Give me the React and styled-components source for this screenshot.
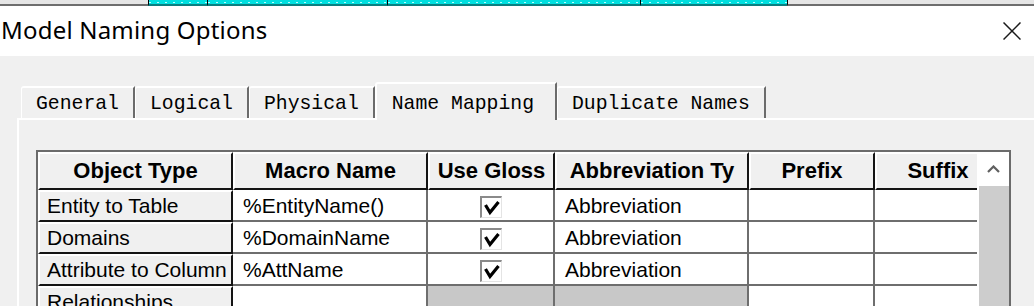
import React from 'react';
import styled, { createGlobalStyle } from 'styled-components';

const Global = createGlobalStyle`
  html, body { margin: 0; padding: 0; }
  body { background: #f0f0f0; width: 1034px; height: 306px; overflow: hidden; }
`;

const Window = styled.div`
  width: 1034px;
  height: 306px;
  overflow: hidden;
  display: flex;
  flex-direction: column;
  background: #f0f0f0;
`;

/* strip of the window behind */
const Strip = styled.div`
  height: 6px;
  flex: none;
  display: flex;
`;
const StripSeg = styled.div`
  flex: ${p => (p.$w ? `0 0 ${p.$w}px` : '1')};
  box-sizing: border-box;
  height: 100%;
  border-bottom: 2px solid ${p => (p.$cyan ? '#0b7f80' : '#6e6e6e')};
  border-left: ${p => (p.$sep ? '1px solid #000' : 'none')};
  background: ${p =>
    p.$cyan
      ? 'repeating-linear-gradient(90deg, #b8ffff 0 2px, #00dfdf 2px 8px) 0 2px / 100% 1px no-repeat, #00dfdf'
      : '#e6e6e6'};
`;

const TitleBar = styled.div`
  height: 50px;
  flex: none;
  background: #fff;
  display: flex;
  align-items: center;
  justify-content: space-between;
  padding: 0 13px 0 1px;
`;
const Title = styled.div`
  font-family: "Noto Sans", "Open Sans", sans-serif;
  font-size: 24px;
  letter-spacing: 0.2px;
  color: #000;
  line-height: 1;
  margin-top: -2px;
`;
const CloseIcon = styled.svg`
  width: 18px;
  height: 18px;
  margin-top: -1px;
`;

const Body = styled.div`
  flex: 1;
  min-height: 0;
  display: flex;
  flex-direction: column;
  padding: 26px 0 0 17px;
`;

const TabRow = styled.div`
  display: flex;
  align-items: flex-start;
  padding-left: 4px;
  height: 38px;
  margin-bottom: -2px;
  position: relative;
  z-index: 1;
`;
const Tab = styled.div`
  box-sizing: border-box;
  height: ${p => (p.$active ? 38 : 32)}px;
  margin-top: ${p => (p.$active ? 0 : 4)}px;
  padding: ${p => (p.$active ? '6px 21px 0 15px' : '2px 14px 0 14px')};
  border-top: 2px solid #fff;
  border-left: ${p => (p.$active ? 2 : 1)}px solid #fff;
  border-right: 2px solid #6b6b6b;
  border-top-left-radius: 3px;
  background: #f0f0f0;
  font-family: "Liberation Mono", "Courier New", monospace;
  font-size: 19.75px;
  line-height: 28px;
  color: #000;
  white-space: nowrap;
`;

const Panel = styled.div`
  flex: 1;
  min-height: 0;
  border-top: 2px solid #fff;
  border-left: 2px solid #fff;
  padding: 30px 0 0 17px;
  display: flex;
  align-items: flex-start;
`;

const Frame = styled.div`
  display: flex;
  border: 2px solid #6b6b6b;
  border-bottom: none;
  background: #fff;
`;
const Clip = styled.div`
  width: 939px;
  flex: none;
  overflow: hidden;
`;
const Table = styled.div`
  width: 963px;
`;
const Row = styled.div`
  display: grid;
  grid-template-columns: 195px 195px 127px 194px 126px 126px;
  height: ${p => (p.$header ? 38 : 32)}px;
`;
const HeadCell = styled.div`
  box-sizing: border-box;
  background: #f0f0f0;
  border-top: 2px solid #fff;
  border-left: 2px solid #fff;
  border-right: 2px solid #141414;
  border-bottom: 2px solid #141414;
  font-family: "Liberation Sans", Arial, sans-serif;
  font-weight: bold;
  font-size: 22px;
  line-height: 33px;
  text-align: center;
  white-space: nowrap;
  overflow: hidden;
  color: #000;
`;
const RowHead = styled.div`
  box-sizing: border-box;
  background: #f0f0f0;
  border-top: 2px solid #fff;
  border-left: 2px solid #fff;
  border-right: 2px solid #141414;
  border-bottom: 2px solid #141414;
  padding-left: 7px;
  font-family: "Liberation Sans", Arial, sans-serif;
  font-size: 21px;
  line-height: 27px;
  white-space: nowrap;
  overflow: hidden;
  color: #000;
`;
const Cell = styled.div`
  box-sizing: border-box;
  background: ${p => (p.$shade ? '#c8c8c8' : '#fff')};
  border-right: 2px solid #6e6e6e;
  border-bottom: 2px solid #6e6e6e;
  padding-left: 10px;
  font-family: "Liberation Sans", Arial, sans-serif;
  font-size: 21px;
  line-height: 31px;
  white-space: nowrap;
  overflow: hidden;
  color: #000;
`;
const CheckCell = styled(Cell)`
  padding: 6px 0 0 0;
  display: flex;
  justify-content: center;
  align-items: flex-start;
`;
const CheckBox = styled.span`
  box-sizing: border-box;
  width: 22px;
  height: 22px;
  border-top: 2px solid #8a8a8a;
  border-left: 2px solid #8a8a8a;
  border-right: 1px solid #e4e4e4;
  border-bottom: 1px solid #e4e4e4;
  background: #fff;
  display: block;
`;
const CheckMark = styled.svg`
  display: block;
  width: 19px;
  height: 19px;
`;

const Scroll = styled.div`
  width: 32px;
  flex: none;
  display: flex;
  flex-direction: column;
  background: #fff;
`;
const ArrowBtn = styled.div`
  height: 34px;
  flex: none;
  display: flex;
  align-items: center;
  justify-content: center;
`;
const Thumb = styled.div`
  flex: 1;
  margin-left: 2px;
  background: #cdcdcd;
`;

const Check = () => (
  <CheckBox>
    <CheckMark viewBox="0 0 19 19">
      <polyline points="3.5,7 8,14.5 16.5,4" fill="none" stroke="#000" strokeWidth="3.2" />
    </CheckMark>
  </CheckBox>
);

const rows = [
  { type: 'Entity to Table', macro: '%EntityName()', gloss: true, abbr: 'Abbreviation' },
  { type: 'Domains', macro: '%DomainName', gloss: true, abbr: 'Abbreviation' },
  { type: 'Attribute to Column', macro: '%AttName', gloss: true, abbr: 'Abbreviation' },
  { type: 'Relationships', macro: '', gloss: false, abbr: '', shade: true },
];

const tabs = ['General', 'Logical', 'Physical', 'Name Mapping', 'Duplicate Names'];

export default function App() {
  return (
    <Window>
      <Global />
      <Strip>
        <StripSeg $w={148} />
        <StripSeg $w={59} $cyan $sep />
        <StripSeg $w={180} $cyan $sep />
        <StripSeg $w={253} $cyan $sep />
        <StripSeg $w={147} $cyan $sep />
        <StripSeg $sep />
      </Strip>
      <TitleBar>
        <Title>Model Naming Options</Title>
        <CloseIcon viewBox="0 0 18 18">
          <path d="M0.5 0.5 L17.5 17.5 M17.5 0.5 L0.5 17.5" stroke="#1a1a1a" strokeWidth="1.5" fill="none" />
        </CloseIcon>
      </TitleBar>
      <Body>
        <TabRow>
          {tabs.map(t => (
            <Tab key={t} $active={t === 'Name Mapping'}>{t}</Tab>
          ))}
        </TabRow>
        <Panel>
          <Frame>
            <Clip>
              <Table>
                <Row $header>
                  <HeadCell>Object Type</HeadCell>
                  <HeadCell>Macro Name</HeadCell>
                  <HeadCell>Use Gloss</HeadCell>
                  <HeadCell>Abbreviation Ty</HeadCell>
                  <HeadCell>Prefix</HeadCell>
                  <HeadCell>Suffix</HeadCell>
                </Row>
                {rows.map(r => (
                  <Row key={r.type}>
                    <RowHead>{r.type}</RowHead>
                    <Cell>{r.macro}</Cell>
                    <CheckCell $shade={r.shade}>{r.gloss && <Check />}</CheckCell>
                    <Cell $shade={r.shade}>{r.abbr}</Cell>
                    <Cell />
                    <Cell />
                  </Row>
                ))}
              </Table>
            </Clip>
            <Scroll>
              <ArrowBtn>
                <svg width="13" height="8" viewBox="0 0 13 8">
                  <path d="M1 7 L6.5 1.5 L12 7" fill="none" stroke="#606060" strokeWidth="2.2" />
                </svg>
              </ArrowBtn>
              <Thumb />
            </Scroll>
          </Frame>
        </Panel>
      </Body>
    </Window>
  );
}
